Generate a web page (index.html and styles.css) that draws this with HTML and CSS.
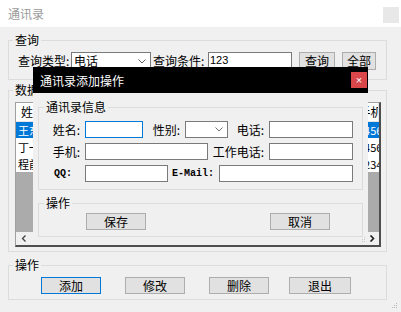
FILE: index.html
```html
<!DOCTYPE html>
<html lang="zh-CN">
<head>
    <meta charset="UTF-8">
    <title>通讯录</title>
    <link rel="stylesheet" href="styles.css">
</head>
<body>
    <div class="window">
        <div class="titlebar">
            <span>通讯录</span>
            <span class="win-close"></span>
        </div>
        <div class="main">
            <fieldset class="group query">
                <legend>查询</legend>
                <div class="query-row">
                    <span class="lbl lbl-type">查询类型:</span>
                    <div class="combo combo-type">
                        <span>电话</span>
                        <svg width="8" height="5" viewBox="0 0 8 5"><polyline points="0.5,0.5 4,4 7.5,0.5" fill="none" stroke="#606060"/></svg>
                    </div>
                    <span class="lbl lbl-cond">查询条件:</span>
                    <div class="textbox tb-cond">123</div>
                    <button class="btn btn-query">查询</button>
                    <button class="btn btn-all">全部</button>
                </div>
            </fieldset>

            <fieldset class="group data">
                <legend>数据</legend>
                <div class="listbox">
                    <table class="grid">
                        <colgroup>
                            <col class="c-name"><col class="c-sex"><col class="c-tel"><col class="c-work"><col>
                        </colgroup>
                        <thead>
                            <tr><th>姓名</th><th>性别</th><th>电话</th><th>工作电话</th><th>手机</th></tr>
                        </thead>
                        <tbody>
                            <tr class="sel"><td>王东</td><td>男</td><td>0531-8123456</td><td>0531-8654321</td><td>14567890123</td></tr>
                            <tr><td>丁一</td><td>女</td><td>0531-8223456</td><td>0531-8754321</td><td>14567890456</td></tr>
                            <tr><td>程前</td><td>男</td><td>0531-8323456</td><td>0531-8854321</td><td>12345678901</td></tr>
                        </tbody>
                    </table>
                    <div class="empty"></div>
                    <div class="hscroll">
                        <span class="arrow">
                            <svg width="6" height="7" viewBox="0 0 6 7"><polyline points="4.5,0.5 1.5,3.5 4.5,6.5" fill="none" stroke="#404040" stroke-width="1.3"/></svg>
                        </span>
                        <span class="arrow">
                            <svg width="6" height="7" viewBox="0 0 6 7"><polyline points="1.5,0.5 4.5,3.5 1.5,6.5" fill="none" stroke="#202020" stroke-width="1.6"/></svg>
                        </span>
                    </div>
                </div>
            </fieldset>

            <fieldset class="group ops">
                <legend>操作</legend>
                <div class="ops-row">
                    <button class="btn btn-wide default">添加</button>
                    <button class="btn btn-wide">修改</button>
                    <button class="btn btn-wide">删除</button>
                    <button class="btn btn-wide btn-exit">退出</button>
                </div>
            </fieldset>
        </div>
        <svg class="grip" width="7" height="7" viewBox="0 0 7 7">
            <rect x="5" y="1" width="1" height="1" fill="#b8b8b8"/>
            <rect x="3" y="3" width="1" height="1" fill="#b8b8b8"/>
            <rect x="5" y="3" width="1" height="1" fill="#b8b8b8"/>
            <rect x="1" y="5" width="1" height="1" fill="#b8b8b8"/>
            <rect x="3" y="5" width="1" height="1" fill="#b8b8b8"/>
            <rect x="5" y="5" width="1" height="1" fill="#b8b8b8"/>
        </svg>

        <!-- modal dialog over the main window -->
        <div class="dialog">
            <div class="dlg-title">
                <span>通讯录添加操作</span>
                <span class="dlg-close">×</span>
            </div>
            <div class="dlg-body">
                <fieldset class="group info">
                    <legend>通讯录信息</legend>
                    <div class="form-row">
                        <span class="f-lbl w46">姓名:</span>
                        <div class="textbox focus w58"></div>
                        <span class="f-lbl w42">性别:</span>
                        <div class="combo w43">
                            <span></span>
                            <svg width="8" height="5" viewBox="0 0 8 5"><polyline points="0.5,0.5 4,4 7.5,0.5" fill="none" stroke="#707070"/></svg>
                        </div>
                        <span class="f-lbl w41">电话:</span>
                        <div class="textbox w84"></div>
                    </div>
                    <div class="form-row">
                        <span class="f-lbl w46">手机:</span>
                        <div class="textbox w123"></div>
                        <span class="f-lbl w61">工作电话:</span>
                        <div class="textbox w84"></div>
                    </div>
                    <div class="form-row">
                        <span class="f-lbl w46 mono qq">QQ:</span>
                        <div class="textbox w83"></div>
                        <span class="f-lbl w51 mono">E-Mail:</span>
                        <div class="textbox w134"></div>
                    </div>
                </fieldset>
                <fieldset class="group dlg-ops">
                    <legend>操作</legend>
                    <div class="dlg-ops-row">
                        <button class="btn btn-wide">保存</button>
                        <button class="btn btn-wide">取消</button>
                    </div>
                </fieldset>
            </div>
            <svg class="dlg-grip" width="5" height="5" viewBox="0 0 5 5">
                <rect x="3" y="0" width="1" height="1" fill="#c8c8c8"/>
                <rect x="1" y="2" width="1" height="1" fill="#c8c8c8"/>
                <rect x="3" y="2" width="1" height="1" fill="#c8c8c8"/>
                <rect x="1" y="4" width="1" height="1" fill="#c8c8c8"/>
                <rect x="3" y="4" width="1" height="1" fill="#c8c8c8"/>
            </svg>
        </div>
    </div>
</body>
</html>
```

FILE: styles.css
```css
* {
    box-sizing: border-box;
}
body {
    margin: 0;
    width: 401px;
    height: 312px;
    overflow: hidden;
    background-color: #f0f0f0;
    font-family: "Noto Sans CJK SC", "Liberation Sans", sans-serif;
    font-size: 12px;
    color: #000;
}
.window {
    position: relative;
    height: 312px;
}
.titlebar {
    height: 27px;
    background-color: #fff;
    display: flex;
    align-items: center;
    justify-content: space-between;
    padding: 0 2px 0 8px;
    color: #9a9a9a;
}
.win-close {
    width: 16px;
    height: 16px;
    background-color: #e8e8e8;
    margin-top: 2px;
}
.main {
    padding: 6px 14px 0 8px;
}
.group {
    margin: 0;
    padding: 0;
    border: 1px solid #dcdcdc;
    min-width: 0;
}
.group legend {
    margin-left: 4px;
    padding: 0 2px;
    line-height: 14px;
}

/* query group */
.query {
    padding: 5px 0 9px 0;
}
.query-row {
    display: flex;
    align-items: center;
    height: 18px;
    padding-left: 9px;
}
.lbl {
    line-height: 18px;
    white-space: nowrap;
}
.lbl-type {
    width: 53px;
}
.lbl-cond {
    width: 55px;
    margin-left: 2px;
}
.combo {
    height: 18px;
    background-color: #fff;
    border: 1px solid #7a7a7a;
    display: flex;
    align-items: center;
    justify-content: space-between;
    padding: 0 4px 0 2px;
    line-height: 16px;
}
.combo-type {
    width: 80px;
}
.textbox {
    height: 18px;
    background-color: #fff;
    border: 1px solid #7a7a7a;
    padding-left: 1px;
    line-height: 15px;
    font-family: "Liberation Sans", sans-serif;
    font-size: 11px;
}
.textbox.focus {
    border-color: #0078d7;
}
.tb-cond {
    width: 84px;
}
.btn {
    height: 18px;
    padding: 0;
    background-color: #e1e1e1;
    border: 1px solid #adadad;
    font-family: inherit;
    font-size: 12px;
    line-height: 16px;
    color: #000;
}
.btn-query {
    width: 36px;
    margin-left: 7px;
}
.btn-all {
    width: 34px;
    margin-left: 7px;
}

/* data group */
.data {
    margin-top: 3px;
    padding: 5px 0 4px 0;
}
.listbox {
    height: 145px;
    margin: 0 5px 0 6px;
    border: 1px solid #a0a0a0;
    border-right: 2px solid #4e4e4e;
    border-bottom: 2px solid #4e4e4e;
    display: flex;
    flex-direction: column;
    overflow: hidden;
}
.grid {
    width: 100%;
    table-layout: fixed;
    border-collapse: collapse;
    background-color: #fff;
}
.c-name { width: 80px; }
.c-sex { width: 50px; }
.c-tel { width: 110px; }
.c-work { width: 100px; }
.grid th, .grid td {
    padding: 0 2px;
    font-weight: normal;
    text-align: left;
    white-space: nowrap;
    overflow: hidden;
}
.grid th {
    height: 18px;
    border-right: 1px solid #e5e5e5;
    border-bottom: 1px solid #e5e5e5;
}
.grid th:first-child {
    padding-left: 5px;
}
.grid td {
    height: 17px;
    font-size: 11px;
}
.grid tr.sel td {
    background-color: #0078d7;
    color: #fff;
}
.empty {
    flex: 1;
    background-color: #ababab;
}
.hscroll {
    height: 13px;
    background-color: #f0f0f0;
    display: flex;
    justify-content: space-between;
}
.arrow {
    width: 15px;
    display: flex;
    align-items: center;
    justify-content: center;
}

/* bottom buttons */
.ops {
    margin-top: 6px;
    padding: 5px 0 5px 0;
}
.ops-row {
    display: flex;
    gap: 24px;
    padding-left: 32px;
}
.btn-wide {
    width: 60px;
    height: 17px;
    line-height: 15px;
}
.btn.default {
    border-color: #0078d7;
}
.btn-exit {
    width: 62px;
    margin-left: -4px;
}
.grip {
    position: absolute;
    right: 3px;
    bottom: 3px;
}

/* dialog */
.dialog {
    position: absolute;
    left: 33px;
    top: 67px;
    width: 335px;
    height: 178px;
    background-color: #f0f0f0;
}
.dlg-title {
    height: 26px;
    background-color: #000;
    color: #fff;
    display: flex;
    align-items: center;
    justify-content: space-between;
    padding-left: 7px;
}
.dlg-close {
    width: 16px;
    height: 16px;
    margin-right: 1px;
    background-color: #d9474a;
    color: #fff;
    font-family: "Liberation Sans", sans-serif;
    font-size: 11px;
    line-height: 16px;
    text-align: center;
}
.dlg-body {
    padding: 7px 5px 0 5px;
}
.dlg-body .group legend {
    margin-left: 5px;
}
.info {
    padding: 7px 0 7px 0;
}
.form-row {
    display: flex;
    align-items: center;
    height: 17px;
    margin-bottom: 5px;
}
.form-row:last-child {
    margin-bottom: 0;
}
.form-row .textbox, .form-row .combo {
    height: 17px;
}
.f-lbl {
    text-align: right;
    padding-right: 5px;
    white-space: nowrap;
}
.mono {
    font-family: "Liberation Mono", monospace;
    font-weight: bold;
    font-size: 10px;
}
.f-lbl.qq {
    text-align: left;
    padding-left: 15px;
}
.w41 { width: 41px; }
.w42 { width: 42px; }
.w43 { width: 43px; }
.w46 { width: 46px; }
.w51 { width: 51px; }
.w58 { width: 58px; }
.w61 { width: 61px; }
.w83 { width: 83px; }
.w84 { width: 84px; }
.w123 { width: 123px; }
.w134 { width: 134px; }
.dlg-ops {
    margin-top: 6px;
    padding: 3px 0 6px 0;
}
.dlg-ops-row {
    display: flex;
    justify-content: space-between;
    padding: 0 32px 0 47px;
}
.dlg-grip {
    position: absolute;
    right: 2px;
    bottom: 3px;
}
```
